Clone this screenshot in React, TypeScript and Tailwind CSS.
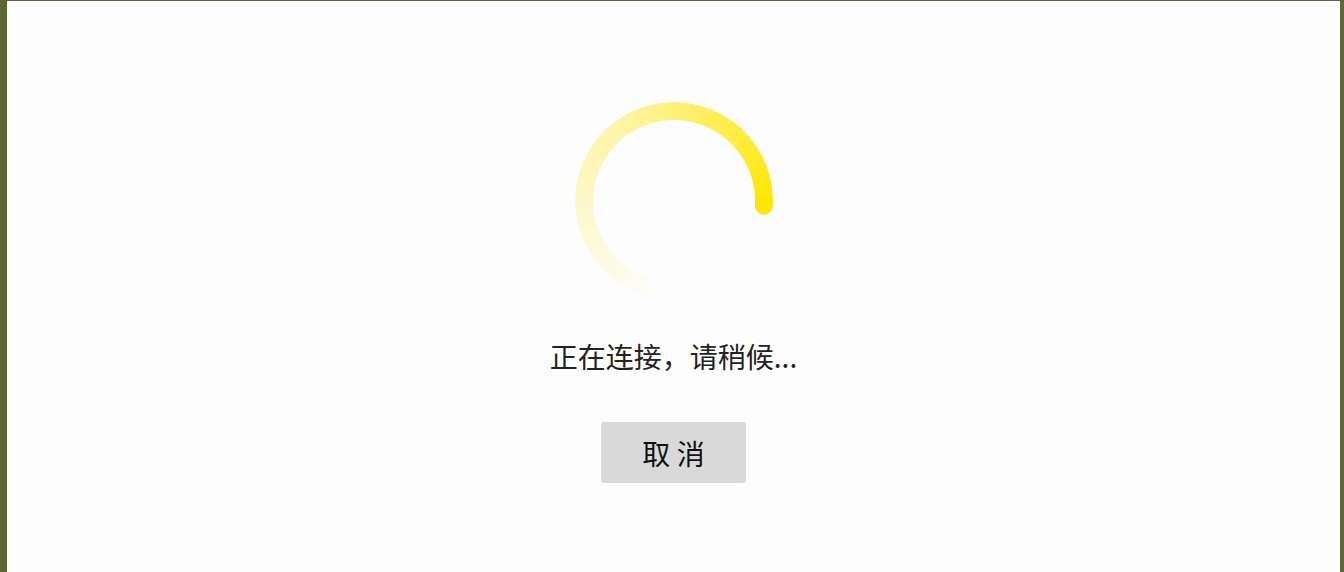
import React from "react";

// ring spinner: conic fade masked into a ring, plus a rounded head
function Spinner() {
  const r = 90;
  const end = (3 * Math.PI) / 180;
  return (
    <div className="relative h-[220px] w-[220px]">
      <div className="absolute inset-[11px] rounded-full bg-[conic-gradient(from_195deg,rgba(255,230,0,0.02)_0deg,rgba(255,230,0,0.35)_130deg,#ffe600_258deg,transparent_258deg)] [mask-image:radial-gradient(circle,transparent_80.5px,black_81.5px,black_98.5px,transparent_99.5px)]" />
      <svg className="absolute inset-0" width="220" height="220" viewBox="0 0 220 220">
        <circle cx={110 + r * Math.cos(end)} cy={110 + r * Math.sin(end)} r={9} fill="#ffe600" />
      </svg>
    </div>
  );
}

export default function App() {
  return (
    <div
      className="flex h-[572px] w-full flex-col bg-[#5c6634]"
      style={{ fontFamily: '"Noto Sans CJK SC", "Noto Sans", sans-serif' }}
    >
      <div className="h-px w-full bg-[#6b5a4a]" />
      <div className="flex flex-1">
        <div className="w-[7px]" />
        <main className="flex flex-1 flex-col items-center bg-[#fdfdfd] pt-[90px]">
          <Spinner />
          <p className="mt-[31px] text-[28px] leading-none text-[#222]">正在连接，请稍候...</p>
          <button className="mt-[52px] flex h-[61px] w-[145px] items-center justify-center rounded-[3px] bg-[#d9d9d9] text-[28px] leading-none text-[#111]">
            取 消
          </button>
        </main>
        <div className="w-[4px]" />
      </div>
    </div>
  );
}
